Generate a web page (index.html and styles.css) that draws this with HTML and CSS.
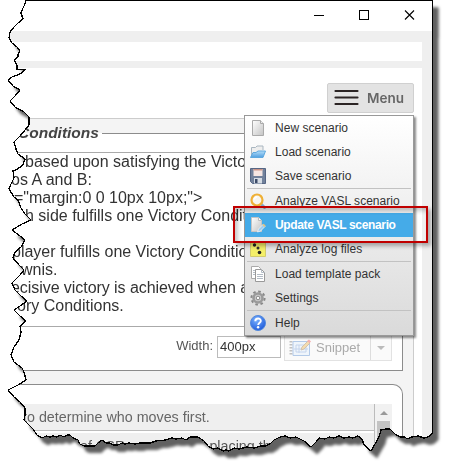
FILE: index.html
```html
<!DOCTYPE html>
<html lang="en">
<head>
<meta charset="utf-8">
<title>Scenario editor</title>
<link rel="stylesheet" href="styles.css">
</head>
<body>
<svg class="defs" width="0" height="0" aria-hidden="true">
  <defs>
    <path id="edge" d="M25.500.5 25 4 22 10 21 13 23 19 18 23 14 27 10 32 9 38 12 43 17 47 20 51 18 54 18 57 14 60 17 65 17 69 25 70 20 74 12 77 8 80 13 86 20 90 15 96 10 101 15 107 24 112 29 117 29 125 25 130 20 136 14 142 16 149 18 154 25 159 23 165 16 170 13 171 14 178 10 186 9 189 14 197 18 200 21 208 25 214 31 220 22 224 12 230 20 236 25 240 21 247 15 252 13 258 19 265 24 270 20 275 12 283 15 290 21 296 27 301 20 306 14 310 20 316 26 321 20 326 21 332 19 340 14 347 11 355 14 362 22 368 24 372 26 380 18 385 8 390 14 397 20 402 25 408 25 415 24 420 33 429 37 435 42 438 46 436 50 437 53 436 57 437 60 435 64 437 67 435 70 435 73 438 78 440 80 444 84 446 95 446 98 443 102 440 106 443 110 443 113 445 118 445 122 443 125 444 129 443 135 444 140 443 150 443 156 441 165 440 172 438 176 439 182 438 186 440 190 437 198 437 204 441 208 446 213 449 218 448 223 451 226 450 229 451 234 448 239 449 247 447 254 448 261 446 266 446 271 443 274 440 280 437 285 436 290 438 296 437 300 439 304 441 311 447 316 442 319 438 325 439 329 437 334 438 339 436 344 438 349 437 353 438 358 436 362 439 364 445 371 451 375 444 379 437 381 430 386 429 390 429 395 434 400 437 405 437 407 439 412 437 418 436 424 438 428 437 432.500 433V.5Z"/>
    <clipPath id="torn"><use href="#edge"/></clipPath>
    <linearGradient id="page" x1="0" y1="0" x2="1" y2="1"><stop offset="0" stop-color="#fff"/><stop offset="1" stop-color="#c4c4c4"/></linearGradient>
    <linearGradient id="folder" x1="0" y1="0" x2="0" y2="1"><stop offset="0" stop-color="#b4ddf8"/><stop offset="1" stop-color="#4f9fe0"/></linearGradient>
    <radialGradient id="ball" cx=".4" cy=".3" r=".75"><stop offset="0" stop-color="#79b1ff"/><stop offset="1" stop-color="#1d58d8"/></radialGradient>
  </defs>
</svg>

<div class="shot">
  <div class="window">
    <header class="titlebar">
      <svg width="104" height="12" viewBox="0 0 104 12" fill="none" stroke="#000" shape-rendering="crispEdges">
        <path d="M0 5.500h10M45.500.5h9v9h-9z"/><path d="M91 .5l9 9M100 .5l-9 9" shape-rendering="auto" stroke-width="1.100"/>
      </svg>
    </header>
    <div class="address"></div>
    <main class="page">
      <div class="toolbar">
        <button class="menu-button">
          <svg width="25" height="17" viewBox="0 0 25 17" stroke="#2b2424" stroke-width="2.200" stroke-linecap="round"><path d="M1.500 2h22M1.500 8.500h22M1.500 15h22"/></svg>
          <span>Menu</span>
        </button>
      </div>
      <div class="panel">
        <section class="group conditions">
          <div class="legend"><span>Conditions</span></div>
          <div class="editor">
            <p class="l1">based upon satisfying the Victory</p>
            <p class="l2">os A and B:</p>
            <p class="l3">="margin:0 0 10px 10px;"&gt;</p>
            <p class="l4">h side fulfills one Victory Condition</p>
            <p>&nbsp;</p>
            <p class="l5">player fulfills one Victory Condition</p>
            <p class="l6">wnis.</p>
            <p class="l7">ecisive victory is achieved when a</p>
            <p class="l8">ory Conditions.</p>
          </div>
          <div class="controls">
            <label>Width:</label>
            <div class="field">400px</div>
            <div class="snippet">
              <svg width="22" height="18" viewBox="0 0 22 18" fill="none">
                <path d="M2 2v15" stroke="#888" stroke-width="3" stroke-dasharray="1.500 1.500"/><path d="M4 2.500h16.500v14H4z" fill="#e4effc" stroke="#6d9ad6"/><path d="M7 6h10v7H7zM10 6v8M5 10h14" stroke="#8eaede"/><path d="M12 11l1-3 6-6 2 2-6 6z" fill="#eebd65" stroke="#a98b62"/><path d="M18 2l2-1.500 2 2-1.500 1.500z" fill="#e66"/>
              </svg>
              <span>Snippet</span>
              <i class="drop"></i>
            </div>
          </div>
        </section>
        <section class="group rules">
          <div class="list">
            <div class="rows">
              <div class="row">to determine who moves first.</div>
              <div class="row second"><span>s of SSR</span><span>placing the</span></div>
            </div>
            <div class="scroll"><i></i><b></b></div>
          </div>
        </section>
      </div>
    </main>
  </div>
</div>
<svg class="outline" width="449" height="473" viewBox="0 0 449 473"><use href="#edge" fill="none" stroke="#000" stroke-width="1.300" shape-rendering="crispEdges"/></svg>

<nav class="menu">
  <div class="item"><svg viewBox="0 0 16 16"><path d="M2.500.5h8l3 3v12h-11z" fill="url(#page)" stroke="#aaa"/><path d="M10.500.5v3h3" fill="#eee" stroke="#aaa"/></svg>New scenario</div>
  <div class="item"><svg viewBox="0 0 16 16"><path d="M1.500 13.500v-10h4l1.500-1.500h6v4" fill="#eee" stroke="#a9b6c0"/><path d="M.5 13.500l2.500-5h3L8 7h7.500L13 13.500z" fill="url(#folder)" stroke="#5ea8de"/></svg>Load scenario</div>
  <div class="item"><svg viewBox="0 0 16 16"><path d="M.5.5h15v15H2.500l-2-2z" fill="#71819b" stroke="#566684"/><path d="M3.500 1h9v7h-9z" fill="#f6e6e2"/><path d="M3.500 1h9v1.500h-9z" fill="#c99488"/><path d="M4 10h8v5.500H4z" fill="#d5dce4"/><path d="M5 11h2.500v4H5z" fill="#3c4b68"/></svg>Save scenario</div>
  <hr>
  <div class="item"><svg viewBox="0 0 16 16"><path d="M11.500 11.500l3 3" stroke="#82a9d0" stroke-width="3" stroke-linecap="round"/><circle cx="7" cy="7" r="5.500" fill="#f8f5ed" stroke="#efb036" stroke-width="2.200"/><path d="M4.300 6.500a3 3 0 0 1 3-2.500" fill="none" stroke="#fff" stroke-width="1.500"/></svg>Analyze VASL scenario</div>
  <div class="item active"><svg viewBox="0 0 16 16"><path d="M1.500.5h7l3 3v11h-10z" fill="url(#page)" stroke="#c4c4c4"/><path d="M8.500.5v3h3" fill="#fff" stroke="#bbb"/><path d="M7.500 15l1-3 4.500-4.500 2 2-4.500 4.500z" fill="#9fcdf0" stroke="#eef3f6" stroke-width=".8"/><path d="M12.500 8l1.200-1.200 2 2L14.500 10z" fill="#e8c27a"/></svg>Update VASL scenario</div>
  <div class="item"><svg viewBox="0 0 16 16"><path d="M.5.500h15v15H.5z" fill="#f4ef68" stroke="#d2cc70"/><circle cx="4.500" cy="4" r="1.700" fill="#222"/><circle cx="8" cy="7" r="1.500" fill="#333"/><circle cx="9.500" cy="11.500" r="1.800" fill="#222"/></svg>Analyze log files</div>
  <hr>
  <div class="item"><svg viewBox="0 0 16 16"><path d="M1.500.5h7l2 2v10h-9z" fill="#fff" stroke="#aaa"/><path d="M5.500 3.500h6l3 3v9h-9z" fill="#fff" stroke="#999"/><path d="M11.500 3.500v3h3M7 8.500h6M7 10.500h6M7 12.500h6M3 4.500h2M3 6.500h2M3 8.500h2" fill="none" stroke="#b3bcc6"/></svg>Load template pack</div>
  <div class="item"><svg viewBox="0 0 16 16"><circle cx="8" cy="8" r="6.600" fill="none" stroke="#888" stroke-width="2" stroke-dasharray="2.600 2.580"/><circle cx="8" cy="8" r="4.500" fill="#ccc" stroke="#9a9a9a" stroke-width="2.600"/><circle cx="8" cy="8" r="1.800" fill="#fafafa" stroke="#888"/></svg>Settings</div>
  <hr>
  <div class="item"><svg viewBox="0 0 16 16"><circle cx="8" cy="8" r="7.500" fill="url(#ball)" stroke="#538add"/><path d="M5.300 6.200C5.300 2.500 11 2.700 10.800 6c-.1 1.700-2.500 1.900-2.600 4" fill="none" stroke="#fff" stroke-width="1.900"/><circle cx="8.100" cy="12.300" r="1.200" fill="#fff"/></svg>Help</div>
</nav>
<div class="highlight"></div>
</body>
</html>
```
FILE: styles.css
```css
* { box-sizing: border-box; }
body {
  margin: 0;
  width: 449px;
  height: 473px;
  overflow: hidden;
  position: relative;
  background: #fff;
  font-family: "Liberation Sans", Arial, sans-serif;
  color: #333;
}
p { margin: 0; }
.defs { position: absolute; }
.shot { filter: drop-shadow(6px 7px 1.5px rgba(0, 0, 0, .62)); }
.window {
  width: 433px;
  height: 473px;
  overflow: hidden;
  background: #efefef;
  clip-path: url(#torn);
}
.outline { position: absolute; left: 0; top: 0; }

.titlebar {
  height: 31px;
  padding: 10px 15px 0 0;
  display: flex;
  justify-content: flex-end;
  background: #fff;
}
.address { height: 19px; margin: 11px 11px 7px 0; background: #fff; }
.page { height: 405px; margin-right: 11px; background: #fff; }
.toolbar {
  height: 50px;
  padding: 15px 8px 0 0;
  display: flex;
  justify-content: flex-end;
}
.menu-button {
  width: 87px;
  height: 30px;
  padding: 0 0 1px 6px;
  display: flex;
  align-items: center;
  gap: 8px;
  border: 1px solid #d0d0d0;
  border-radius: 2px;
  background: #e3e3e3;
  color: #666;
  font: 600 13.5px Inter, sans-serif;
}
.panel {
  width: 414px;
  height: 355px;
  border: solid #ccc;
  border-width: 1px 1px 0 0;
  background: #f4f4f4;
}
.group { width: 403px; border-right: 1px solid #8c8c8c; background: #fff; }
.conditions {
  height: 252px;
  border-bottom: 1px solid #8c8c8c;
  background: linear-gradient(#f4f4f4 14px, #fff 14px);
}
.legend {
  height: 33px;
  padding-left: 18px;
  display: flex;
  align-items: flex-start;
  gap: 3px;
  font: italic bold 15.5px/28px "Liberation Sans", Arial, sans-serif;
  color: #444;
}
.legend::after { content: ""; flex: 1; height: 1px; margin-top: 14px; background: #8c8c8c; }
.editor {
  height: 175px;
  width: 392px;
  border: 1px solid #aaa;
  font-size: 16px;
  line-height: 18px;
  white-space: nowrap;
  overflow: hidden;
}
.l1 { padding-left: 24px; }
.l2 { padding-left: 10px; }
.l3 { padding-left: 13px; }
.l4 { padding-left: 24px; }
.l5 { padding-left: 11px; }
.l6 { padding-left: 20px; }
.l7 { padding-left: 10px; letter-spacing: -.06px; }
.l8 { padding-left: 16px; }
.controls {
  height: 43px;
  padding: 9px 10px 0 0;
  display: flex;
  justify-content: flex-end;
  font-size: 13px;
  line-height: 20px;
  color: #555;
}
.field {
  width: 64px;
  height: 22px;
  margin: 0 3px 0 4px;
  padding-left: 2px;
  border: 1px solid #bbb;
  color: #333;
}
.snippet {
  width: 108px;
  height: 26px;
  margin-top: -1px;
  display: flex;
  align-items: center;
  gap: 5px;
  padding-left: 4px;
  border: 1px solid #e2e2e2;
  background: #fafafa;
  color: #aaa;
}
.snippet svg { opacity: .5; flex: none; }
.snippet span { width: 49px; }
.drop { flex: 1; height: 24px; border-left: 1px solid #ddd; display: grid; place-items: center; }
.drop::before { content: ""; border: 4px solid transparent; border-top-color: #bbb; border-bottom: 0; }
.rules {
  height: 90px;
  margin-top: 13px;
  border-top: 1px solid #8c8c8c;
  border-top-right-radius: 10px;
}
.list { width: 392px; padding-top: 19px; display: flex; }
.rows { flex: 1; border-right: 1px solid #bbb; }
.row {
  height: 27px;
  padding-left: 23px;
  border-bottom: 1px solid #bbb;
  background: #efefef;
  font-size: 14.3px;
  line-height: 26px;
  white-space: nowrap;
  color: #666;
}
.second { margin-top: 2px; padding-left: 69px; display: flex; gap: 84px; color: #555; }
.scroll { width: 17px; padding: 7px 2px 0; background: #f1f1f1; }
.scroll i { display: block; width: 8px; margin: 0 auto; border: 4px solid transparent; border-bottom-color: #999; border-top: 0; }
.scroll b { display: block; height: 40px; margin-top: 6px; background: #c3c3c3; }

.menu {
  position: absolute;
  left: 244px;
  top: 115px;
  width: 170px;
  border: 1px solid #999;
  background: linear-gradient(#fff, #dadada);
  box-shadow: 2px 2px 2px rgba(0, 0, 0, .45);
}
.item {
  height: 24px;
  padding-left: 5px;
  display: flex;
  align-items: center;
  gap: 9px;
  font-size: 12px;
  letter-spacing: .03px;
  white-space: nowrap;
}
.item svg { width: 16px; height: 16px; flex: none; }
.active { background: #45abe8; color: #fff; font-weight: bold; letter-spacing: -.35px; }
.menu hr { height: 1px; margin: 0 2px; border: 0; background: #c2c2c2; }
.highlight {
  position: absolute;
  left: 233px;
  top: 206px;
  width: 195px;
  height: 37px;
  border: 2px solid #c00000;
  box-shadow: 3px 3px 4px rgba(0, 0, 0, .3), inset 3px 3px 4px rgba(0, 0, 0, .22);
}
```
